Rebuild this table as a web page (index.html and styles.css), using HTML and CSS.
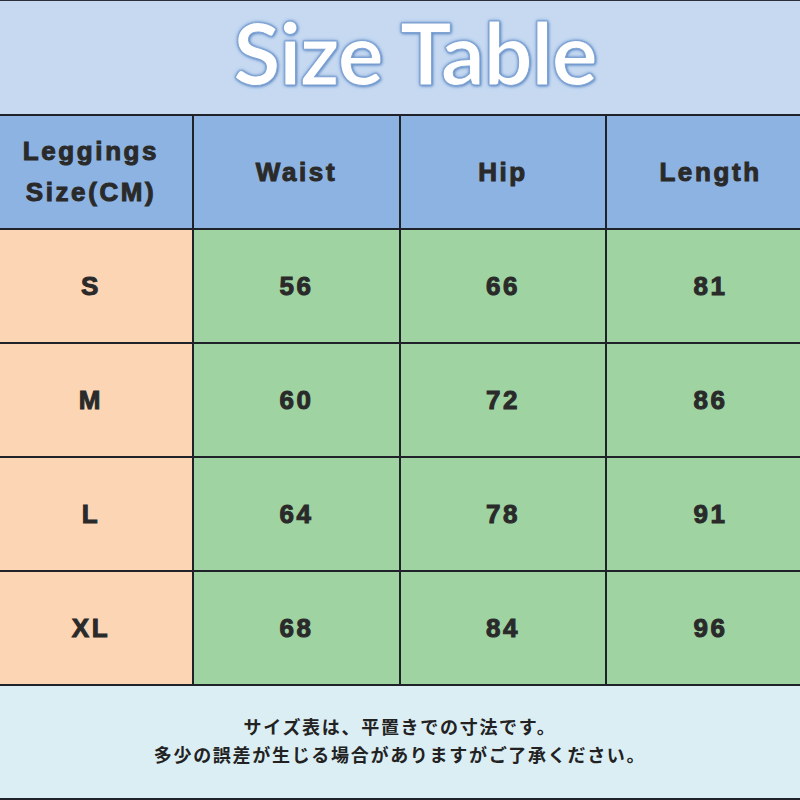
FILE: index.html
```html
<!DOCTYPE html>
<html lang="ja">
<head>
<meta charset="utf-8">
<link rel="stylesheet" href="styles.css">
</head>
<body>
<div class="page">
  <header class="title-band"><h1 class="title">Size Table</h1></header>
  <div class="table">
    <div class="cell head first">Leggings<br>Size(CM)</div>
    <div class="cell head">Waist</div>
    <div class="cell head">Hip</div>
    <div class="cell head last">Length</div>

    <div class="cell size first">S</div>
    <div class="cell val">56</div>
    <div class="cell val">66</div>
    <div class="cell val last">81</div>

    <div class="cell size first">M</div>
    <div class="cell val">60</div>
    <div class="cell val">72</div>
    <div class="cell val last">86</div>

    <div class="cell size first">L</div>
    <div class="cell val">64</div>
    <div class="cell val">78</div>
    <div class="cell val last">91</div>

    <div class="cell size first">XL</div>
    <div class="cell val">68</div>
    <div class="cell val">84</div>
    <div class="cell val last">96</div>
  </div>
  <footer class="note">
    <p>サイズ表は、平置きでの寸法です。</p>
    <p>多少の誤差が生じる場合がありますがご了承ください。</p>
  </footer>
</div>
</body>
</html>
```
FILE: styles.css
```css
* { box-sizing: border-box; }
html, body { margin: 0; padding: 0; background: #ffffff; }
.page {
  width: 800px;
  height: 800px;
  display: flex;
  flex-direction: column;
  overflow: hidden;
}
.title-band {
  height: 114px;
  border-top: 1px solid #2a2f3a;
  background: #c6d9f1;
  display: flex;
  align-items: center;
  justify-content: center;
  padding-left: 30px;
}
.title {
  margin: 0;
  font-family: "Lato", "Open Sans", sans-serif;
  font-weight: 700;
  font-size: 86px;
  line-height: 1;
  letter-spacing: -1px;
  color: #ffffff;
  padding-bottom: 12px;
  -webkit-text-stroke: 1px #7ea3d4;
  text-shadow: 0 0 2px #4f7fbf, 0 0 4px #6f97cc, 1px 1px 3px #5a86c2;
}
.table {
  display: grid;
  grid-template-columns: 192px 205px 204px 1fr;
  grid-auto-rows: 112px;
  gap: 2px;
  background: #1f2228;
  border-top: 2px solid #1f2228;
  border-bottom: 2px solid #1f2228;
}
.cell {
  display: flex;
  align-items: center;
  justify-content: center;
  text-align: center;
  font-family: "Liberation Sans", Arial, sans-serif;
  font-weight: 700;
  font-size: 26px;
  letter-spacing: 2.6px;
  color: #2a2a2a;
  -webkit-text-stroke: 1px #2a2a2a;
}
.first { padding-right: 10px; }
.last { padding-left: 14px; }
.head { background: #8db3e2; line-height: 41px; }
.size { background: #fcd5b4; }
.val { background: #9fd4a2; }
.note {
  flex: 1;
  background: #dbeef4;
  border-bottom: 2px solid #1f2228;
  display: flex;
  flex-direction: column;
  justify-content: center;
  align-items: center;
  padding-bottom: 4px;
}
.note p {
  margin: 0;
  font-family: "Noto Sans CJK JP", sans-serif;
  font-weight: 700;
  font-size: 18px;
  line-height: 28px;
  letter-spacing: 1.7px;
  color: #222222;
}
```
